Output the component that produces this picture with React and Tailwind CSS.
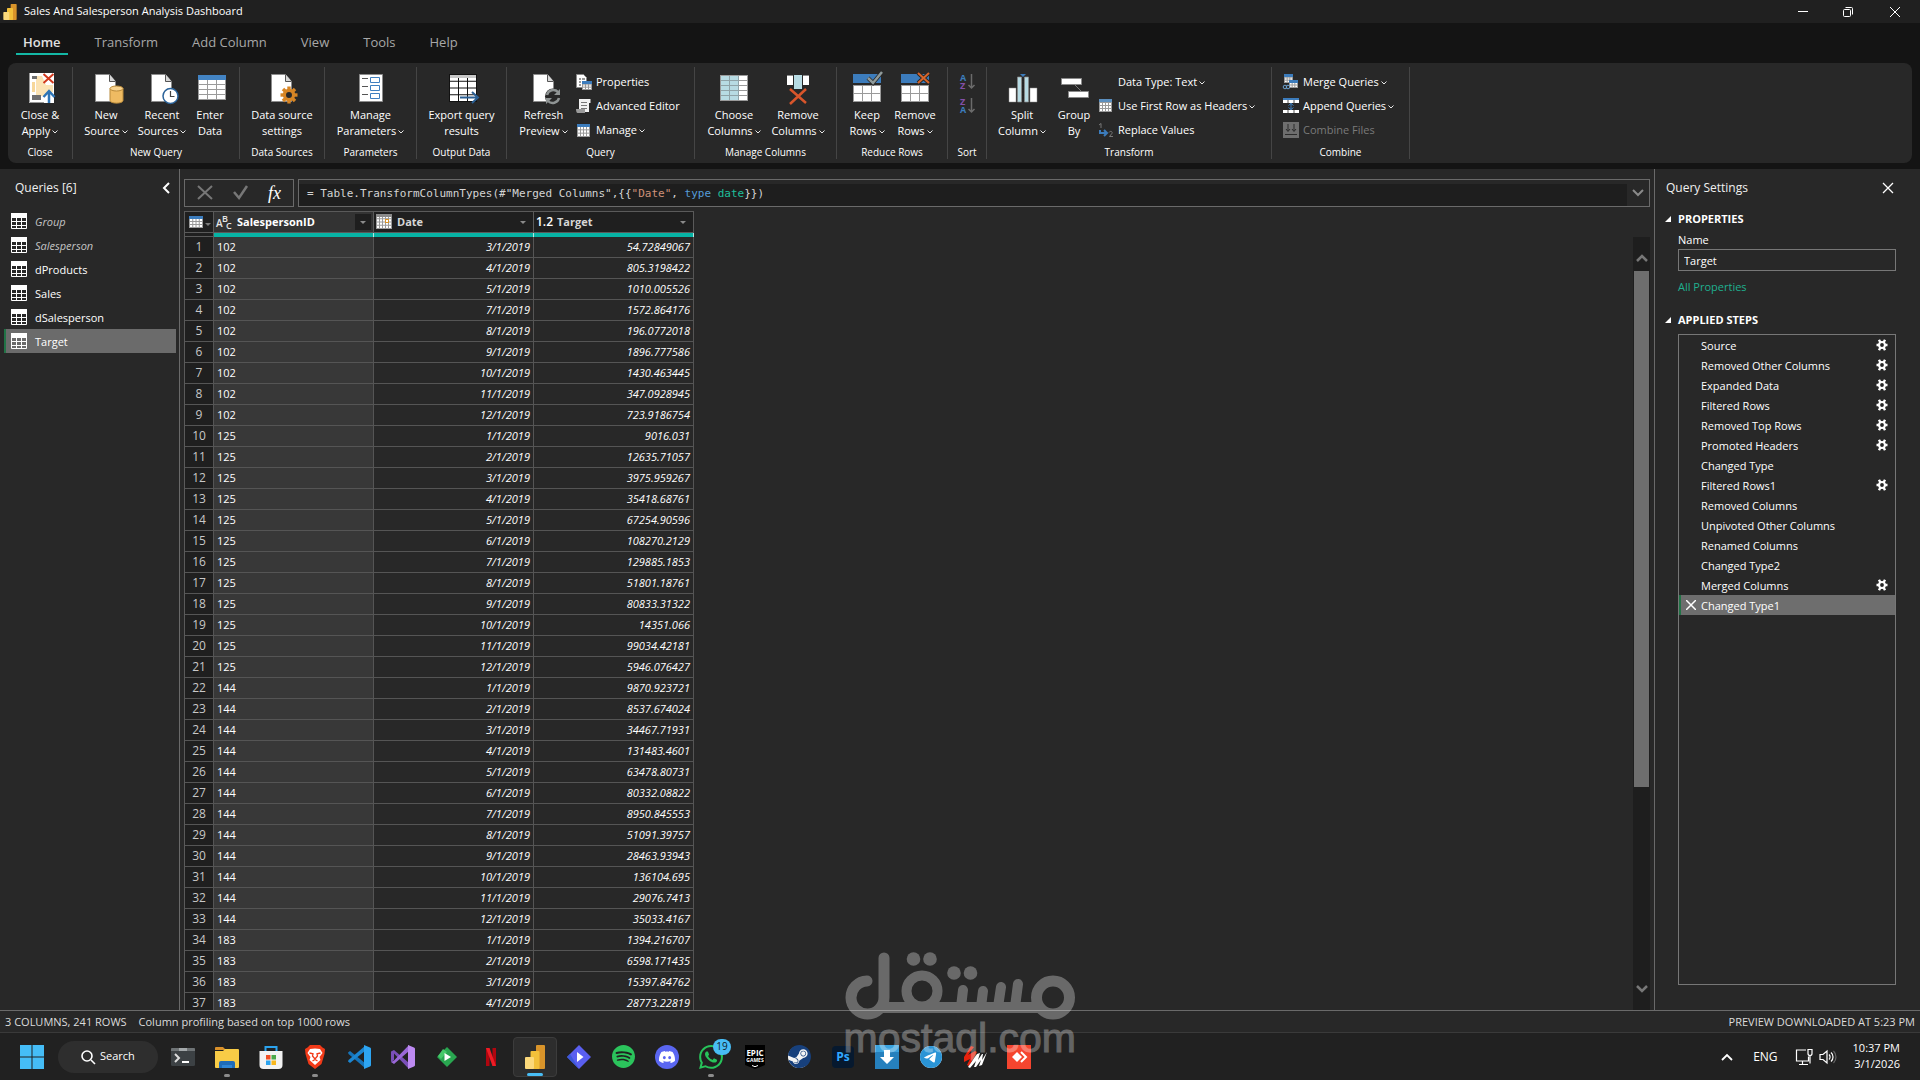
import React from 'react';
import { SiSpotify, SiDiscord, SiWhatsapp, SiSteam, SiTelegram } from 'react-icons/si';

const UI = "font-['Open_Sans','Noto_Sans',sans-serif]";

/* ---------- ribbon icons ---------- */

function Big({ children }) {
  return (
    <svg className="h-8 w-8 shrink-0 overflow-visible" viewBox="0 0 32 32" fill="none" aria-hidden="true">
      {children}
    </svg>
  );
}

function Doc() {
  return (
    <>
      <path d="M5.500 3.500h14l6 7v20h-20z" fill="#fff" stroke="#8c8c8c" />
      <path d="M19.500 3.500v7h6" fill="#d8d8d8" stroke="#555" />
    </>
  );
}

function Gear({ cx, cy, r, color, hole }) {
  const teeth = [0, 45, 90, 135, 180, 225, 270, 315];
  return (
    <g transform={`translate(${cx} ${cy})`}>
      {teeth.map((a) => (
        <rect key={a} x={-r * 0.2} y={-r} width={r * 0.4} height={r * 0.5} fill={color} transform={`rotate(${a})`} />
      ))}
      <circle r={r * 0.54} stroke={color} strokeWidth={r * 0.38} fill={hole} />
    </g>
  );
}

function Grid({ x, y, w, h, cols, rows, fill = '#fff', line = '#9a9a9a' }) {
  const v = Array.from({ length: cols - 1 }, (_, i) => x + ((i + 1) * w) / cols);
  const hz = Array.from({ length: rows - 1 }, (_, i) => y + ((i + 1) * h) / rows);
  return (
    <g>
      <rect x={x} y={y} width={w} height={h} fill={fill} stroke={line} />
      {v.map((p) => (
        <path key={'v' + p} d={`M${p} ${y}v${h}`} stroke={line} />
      ))}
      {hz.map((p) => (
        <path key={'h' + p} d={`M${x} ${p}h${w}`} stroke={line} />
      ))}
    </g>
  );
}

const icons = {
  close: (
    <Big>
      <path d="M5 2h25v30H5z" fill="#fff" />
      <path d="M5.500 2v29.500H20" stroke="#999" />
      <path d="M12 5h6l4 9h7v7l-9 4h-8z" fill="#fbe3b4" />
      <path d="M8 5h5v3H8zM8 24h9v5H8z" fill="#6f6f6f" />
      <path d="M8 11h3v10H8z" fill="#f7d79a" />
      <path d="M19.500 3l10 9M29.500 3l-10 9" stroke="#d13a1e" strokeWidth="2" />
      <path d="M25 32V21M19.500 26l5.500-6 5.500 6" stroke="#2e75b6" strokeWidth="2.500" />
    </Big>
  ),
  newSource: (
    <Big>
      <Doc />
      <path d="M20 17.500v12c0 3.500 13 3.500 13 0v-12z" fill="#efbb62" stroke="#b98a3a" />
      <ellipse cx="26.500" cy="17.500" rx="6.500" ry="2.500" fill="#f9d48f" stroke="#b98a3a" />
    </Big>
  ),
  recent: (
    <Big>
      <Doc />
      <circle cx="24.500" cy="25" r="7.500" fill="#fff" stroke="#2a6299" strokeWidth="1.500" />
      <path d="M24.500 20v5.500h4" stroke="#444" strokeWidth="1.200" />
    </Big>
  ),
  enter: (
    <Big>
      <Grid x={4.5} y={8.5} w={27} h={20} cols={3} rows={4} />
      <path d="M4 4h28v5H4z" fill="#4384c4" />
    </Big>
  ),
  dataSource: (
    <Big>
      <Doc />
      <Gear cx={23} cy={24} r={8.5} color="#d78524" hole="#282828" />
    </Big>
  ),
  params: (
    <Big>
      <path d="M4.500 3.500h23v27h-23z" fill="#fff" stroke="#8c8c8c" />
      <path d="M7 7.500h6M7 15.500h6M7 23.500h6" stroke="#555" />
      <path d="M15.500 6.500h9v5h-9zM15.500 14.500h9v5h-9zM15.500 22.500h9v5h-9z" stroke="#3f7fbf" />
    </Big>
  ),
  exportQ: (
    <Big>
      <Grid x={3.5} y={3.5} w={27} h={27} cols={3} rows={4} line="#111" />
      <path d="M4 4h26v3H4z" fill="#c8c8c8" />
      <path d="M14 26.500h17M26 21l6 5.500-6 5.500" stroke="#2a5f94" strokeWidth="2" />
    </Big>
  ),
  refresh: (
    <Big>
      <Doc />
      <circle cx="25" cy="25.500" r="8" fill="#282828" />
      <path d="M19 24a6.500 6.500 0 0 1 11-3M31 27a6.500 6.500 0 0 1-11 3" stroke="#8f9494" strokeWidth="2.500" />
      <path d="M32 18v6h-6zM18 33v-6h6z" fill="#8f9494" />
    </Big>
  ),
  choose: (
    <Big>
      <Grid x={2.5} y={4.5} w={27} h={25} cols={3} rows={5} />
      <path d="M3 5h18v24H3z" fill="#b7dbe3" />
      <path d="M11.500 5v24M20.500 5v24M3 9.500h18M3 14.500h18M3 19.500h18M3 24.500h18" stroke="#8fa3a8" />
    </Big>
  ),
  removeCols: (
    <Big>
      <path d="M5 4h6v10H5zM21 4h6v10h-6z" fill="#fff" />
      <path d="M5 4.500h6M21 4.500h6" stroke="#888" />
      <path d="M12 4h8v14h-8z" fill="#b7dbe3" />
      <path d="M8 18l16 14M24 18L8 33" stroke="#d8552b" strokeWidth="2.500" />
    </Big>
  ),
  keepRows: (
    <Big>
      <path d="M2 3h28v9H2z" fill="#3c7cbc" />
      <Grid x={2.5} y={14.5} w={27} h={16} cols={3} rows={2} />
      <path d="M17 7l5 5 9-11" stroke="#282828" strokeWidth="4" />
      <path d="M17 7l5 5 9-11" stroke="#8f9a9a" strokeWidth="2.500" />
    </Big>
  ),
  removeRows: (
    <Big>
      <path d="M2 3h28v9H2z" fill="#3c7cbc" />
      <Grid x={2.5} y={14.5} w={27} h={16} cols={3} rows={2} />
      <path d="M19 2l11 10M30 2L19 12" stroke="#282828" strokeWidth="4" />
      <path d="M19 2l11 10M30 2L19 12" stroke="#d8652b" strokeWidth="2" />
    </Big>
  ),
  split: (
    <Big>
      <path d="M3 17h7v14H3zM24 17h7v14h-7z" fill="#fff" stroke="#8a8a8a" strokeWidth=".5" />
      <path d="M11.500 6h4v25h-4zM18.500 6h4v25h-4z" fill="#b7dbe3" stroke="#8a8a8a" strokeWidth=".7" />
      <path d="M14 3h6l-3 3z" fill="#3c7cbc" />
      <path d="M17 8v23" stroke="#222" strokeDasharray="2 1" />
    </Big>
  ),
  group: (
    <Big>
      <path d="M17 14l6 6" stroke="#777" />
      <path d="M3.500 7.500h20v6h-20zM10.500 20.500h20v6h-20z" fill="#fff" stroke="#8a8a8a" />
    </Big>
  ),
};

function Small({ children }) {
  return (
    <svg className="h-4 w-4 shrink-0 overflow-visible" viewBox="0 0 16 16" fill="none" aria-hidden="true">
      {children}
    </svg>
  );
}

const small = {
  properties: (
    <Small>
      <path d="M.5.500h7l3 3v10H.500z" fill="#fff" stroke="#888" />
      <path d="M3 5h2M3 8h2M3 11h2M6 5h3" stroke="#777" strokeWidth="1.500" />
      <Grid x={6.5} y={8.5} w={9} h={7} cols={3} rows={3} />
      <path d="M6 7h10v3H6z" fill="#3c7cbc" />
    </Small>
  ),
  advanced: (
    <Small>
      <path d="M3 1h11.500v4H13v9H3z" fill="#f1f1f1" />
      <path d="M5 4.500h6M5 7.500h6M5 10.500h6" stroke="#777" />
      <path d="M0 11h9v4H1.500C.5 15 0 13 0 11z" fill="#9a9a9a" />
    </Small>
  ),
  manage: (
    <Small>
      <Grid x={1.5} y={4.5} w={12} h={10} cols={4} rows={3} />
      <path d="M1 2h13v3H1z" fill="#3c7cbc" />
    </Small>
  ),
  headers: (
    <Small>
      <Grid x={1.5} y={1.5} w={12} h={12} cols={4} rows={4} />
      <path d="M1 1h13v3H1z" fill="#5b8fbf" />
    </Small>
  ),
  replace: (
    <Small>
      <path d="M1 3l2-1.500V6" stroke="#777" />
      <path d="M11 10.500c1-2 4-1 3 .8L11.500 14.500H15" stroke="#777" />
      <path d="M2 8v3h6M6 8l3 3-3 3" stroke="#3c7cbc" strokeWidth="2" />
    </Small>
  ),
  merge: (
    <Small>
      <Grid x={1.5} y={1.5} w={8} h={7} cols={3} rows={3} />
      <path d="M1 0h9v3H1z" fill="#3c7cbc" />
      <Grid x={6.5} y={8.5} w={8} h={5} cols={3} rows={2} />
      <path d="M6 6h9v3H6z" fill="#3c7cbc" />
      <circle cx="2" cy="13" r="1.800" stroke="#6ba0cf" />
      <circle cx="5" cy="13" r="1.800" stroke="#6ba0cf" />
    </Small>
  ),
  append: (
    <Small>
      <path d="M0 2h16v3H0zM0 12h16v3H0z" fill="#fff" />
      <path d="M0 0h16v2H0z" fill="#3c7cbc" />
      <path d="M5 5v-3M11 5v-3M5 12v3M11 12v3" stroke="#555" />
      <path d="M8 5v7M5.500 7.500L8 5.500l2.500 2M5.500 9.500L8 11.500l2.500-2" stroke="#3c7cbc" />
    </Small>
  ),
  combine: (
    <Small>
      <path d="M0 0h16v16H0z" fill="#6e6e6e" />
      <path d="M5 2v7M11 2v7M3 7l2 2.500L7 7M9 7l2 2.500L13 7M2 12.500h12" stroke="#2b2b2b" />
    </Small>
  ),
};

function Caret() {
  return (
    <svg className="ml-0.5 inline-block h-1.5 w-1.5" viewBox="0 0 6 6" fill="none" aria-hidden="true">
      <path d="M.5 1.500L3 4l2.500-2.500" stroke="#e8e8e8" />
    </svg>
  );
}

function BigButton({ icon, a, b, caret, width }) {
  return (
    <button type="button" className={`flex shrink-0 flex-col items-center pt-2 text-[11px] leading-4 whitespace-nowrap text-white ${width}`}>
      {icon}
      <span className="mt-1">{a}</span>
      <span>
        {b}
        {caret && <Caret />}
      </span>
    </button>
  );
}

function SmallButton({ icon, label, caret, disabled }) {
  return (
    <button
      type="button"
      disabled={disabled}
      className={`flex h-6 items-center gap-1 text-[11px] leading-4 whitespace-nowrap ${disabled ? 'text-[#7a7a7a]' : 'text-white'}`}
    >
      {icon || <span className="w-4" />}
      <span>
        {label}
        {caret && <Caret />}
      </span>
    </button>
  );
}

function Group({ label, width, className = '', children }) {
  return (
    <section className={`my-1 flex shrink-0 flex-col justify-between border-r border-[#454545] ${width}`}>
      <div className={`-mt-1 flex ${className}`}>{children}</div>
      <h2 className="text-center text-[10px] leading-[14px] whitespace-nowrap text-white">{label}</h2>
    </section>
  );
}

function SortIcon({ top, bottom }) {
  const c = { A: '#3c7cbc', Z: '#8350a8' };
  return (
    <svg className="h-5 w-4 overflow-visible" viewBox="0 0 16 20" fill="none" aria-hidden="true">
      <text x="1" y="9" fontSize="9" fontWeight="700" fontFamily="Open Sans" fill={c[top]}>{top}</text>
      <text x="1" y="17" fontSize="9" fontWeight="700" fontFamily="Open Sans" fill={c[bottom]}>{bottom}</text>
      <path d="M12.500 2v14M9.500 13l3 3 3-3" stroke="#6b6b6b" strokeWidth="1.500" />
    </svg>
  );
}

function PowerBI({ className }) {
  return (
    <svg className={className} viewBox="0 0 20 24" aria-hidden="true">
      <rect x="11" y="0" width="9" height="24" rx="1" fill="#d9942a" />
      <rect x="5.500" y="6" width="9" height="18" rx="1" fill="#f2c03a" />
      <rect x="0" y="12" width="9" height="12" rx="1" fill="#fbd97b" />
    </svg>
  );
}

/* ---------- page sections ---------- */

function TitleBar() {
  return (
    <header className="flex h-[23px] shrink-0 items-center bg-[#202020] text-[11px] text-white">
      <PowerBI className="ml-[3px] h-4 w-3.5" />
      <h1 className="ml-[7px] flex-1">Sales And Salesperson Analysis Dashboard</h1>
      <button type="button" aria-label="Minimize" className="flex h-full w-[46px] items-center justify-center">
        <span className="h-px w-2.5 bg-white" />
      </button>
      <button type="button" aria-label="Restore" className="flex h-full w-11 items-center justify-center">
        <svg className="h-2.5 w-2.5" viewBox="0 0 10 10" fill="none" stroke="#fff">
          <rect x=".5" y="2.500" width="7" height="7" rx="1" />
          <path d="M2.500.5h6a1 1 0 0 1 1 1v6" />
        </svg>
      </button>
      <button type="button" aria-label="Close" className="flex h-full w-[50px] items-center justify-center">
        <svg className="h-2.5 w-2.5" viewBox="0 0 10 10" fill="none" stroke="#fff">
          <path d="M0 0l10 10M10 0L0 10" />
        </svg>
      </button>
    </header>
  );
}

function Tabs() {
  const tabs = ['Home', 'Transform', 'Add Column', 'View', 'Tools', 'Help'];
  return (
    <nav className="flex h-10 shrink-0 items-start gap-5 px-4 pt-1.5 text-[13px] text-[#a8a8a8]">
      {tabs.map((t, i) => (
        <button
          key={t}
          type="button"
          className={`h-[26px] border-b-2 px-[7px] pt-0.5 leading-[22px] ${i === 0 ? 'border-[#14b8a6] font-semibold text-[#e0e0e0]' : 'border-transparent'}`}
        >
          {t}
        </button>
      ))}
    </nav>
  );
}

function Ribbon() {
  return (
    <div className="mx-2 flex h-[100px] shrink-0 overflow-hidden rounded-lg bg-[#282828]">
      <Group label="Close" width="w-[65px]" className="justify-center">
        <BigButton icon={icons.close} a="Close &" b="Apply" caret width="w-14" />
      </Group>
      <Group label="New Query" width="w-[167px]" className="pl-[7px]">
        <BigButton icon={icons.newSource} a="New" b="Source" caret width="w-[52px]" />
        <BigButton icon={icons.recent} a="Recent" b="Sources" caret width="w-[60px]" />
        <BigButton icon={icons.enter} a="Enter" b="Data" width="w-9" />
      </Group>
      <Group label="Data Sources" width="w-[85px]" className="justify-center">
        <BigButton icon={icons.dataSource} a="Data source" b="settings" width="w-20" />
      </Group>
      <Group label="Parameters" width="w-[92px]" className="justify-center">
        <BigButton icon={icons.params} a="Manage" b="Parameters" caret width="w-20" />
      </Group>
      <Group label="Output Data" width="w-[90px]" className="justify-center">
        <BigButton icon={icons.exportQ} a="Export query" b="results" width="w-20" />
      </Group>
      <Group label="Query" width="w-[188px]" className="gap-1 pl-2">
        <BigButton icon={icons.refresh} a="Refresh" b="Preview" caret width="w-[57px]" />
        <div className="flex flex-col pt-[7px]">
          <SmallButton icon={small.properties} label="Properties" />
          <SmallButton icon={small.advanced} label="Advanced Editor" />
          <SmallButton icon={small.manage} label="Manage" caret />
        </div>
      </Group>
      <Group label="Manage Columns" width="w-[142px]" className="pl-[7px]">
        <BigButton icon={icons.choose} a="Choose" b="Columns" caret width="w-16" />
        <BigButton icon={icons.removeCols} a="Remove" b="Columns" caret width="w-16" />
      </Group>
      <Group label="Reduce Rows" width="w-[111px]" className="pl-1.5">
        <BigButton icon={icons.keepRows} a="Keep" b="Rows" caret width="w-12" />
        <BigButton icon={icons.removeRows} a="Remove" b="Rows" caret width="w-12" />
      </Group>
      <Group label="Sort" width="w-[39px]" className="flex-col items-center pt-[7px]">
        <button type="button" aria-label="Sort ascending" className="flex h-6 items-center">
          <SortIcon top="A" bottom="Z" />
        </button>
        <button type="button" aria-label="Sort descending" className="flex h-6 items-center">
          <SortIcon top="Z" bottom="A" />
        </button>
      </Group>
      <Group label="Transform" width="w-[285px]" className="pl-[7px]">
        <BigButton icon={icons.split} a="Split" b="Column" caret width="w-14" />
        <BigButton icon={icons.group} a="Group" b="By" width="w-12" />
        <div className="flex flex-col pt-[7px]">
          <SmallButton label="Data Type: Text" caret />
          <SmallButton icon={small.headers} label="Use First Row as Headers" caret />
          <SmallButton icon={small.replace} label="Replace Values" />
        </div>
      </Group>
      <Group label="Combine" width="w-[138px]" className="pl-[11px]">
        <div className="flex flex-col pt-[7px]">
          <SmallButton icon={small.merge} label="Merge Queries" caret />
          <SmallButton icon={small.append} label="Append Queries" caret />
          <SmallButton icon={small.combine} label="Combine Files" disabled />
        </div>
      </Group>
    </div>
  );
}

function QueryIcon() {
  return (
    <svg className="h-4 w-4 shrink-0" viewBox="0 0 16 16" fill="none" stroke="#fff" aria-hidden="true">
      <path d="M0 0h16v5H0z" fill="#fff" stroke="none" />
      <path d="M.5.500h15v15H.500zM5.500 5v11M10.500 5v11M0 8.500h16M0 12.500h16" />
    </svg>
  );
}

const queries = ['Group', 'Salesperson', 'dProducts', 'Sales', 'dSalesperson', 'Target'];

function QueriesPane() {
  return (
    <aside className="w-[180px] shrink-0 border-r border-[#6a6a6a]">
      <div className="flex h-10 items-center justify-between pr-[7px] pb-[3px] pl-[15px] text-[12px] text-[#f0f0f0]">
        <h2>Queries [6]</h2>
        <button type="button" aria-label="Collapse" className="p-0.5">
          <svg className="h-3 w-2" viewBox="0 0 8 12" fill="none">
            <path d="M7 1L2 6l5 5" stroke="#fff" strokeWidth="2" />
          </svg>
        </button>
      </div>
      <ul className="pr-[3px] pl-1 text-[11px] text-white">
        {queries.map((q, i) => (
          <li key={q}>
            <button
              type="button"
              className={`flex h-6 w-full items-center gap-2 border-l-2 pl-[5px] text-left ${
                i === 5 ? 'border-[#217346] bg-[#6b6b6b]' : 'border-transparent'
              } ${i < 2 ? 'text-[#c4c4c4] italic' : ''}`}
            >
              <QueryIcon />
              <span className="pt-0.5">{q}</span>
            </button>
          </li>
        ))}
      </ul>
    </aside>
  );
}

const rows = [
  ['102', '3/1/2019', '54.72849067'],
  ['102', '4/1/2019', '805.3198422'],
  ['102', '5/1/2019', '1010.005526'],
  ['102', '7/1/2019', '1572.864176'],
  ['102', '8/1/2019', '196.0772018'],
  ['102', '9/1/2019', '1896.777586'],
  ['102', '10/1/2019', '1430.463445'],
  ['102', '11/1/2019', '347.0928945'],
  ['102', '12/1/2019', '723.9186754'],
  ['125', '1/1/2019', '9016.031'],
  ['125', '2/1/2019', '12635.71057'],
  ['125', '3/1/2019', '3975.959267'],
  ['125', '4/1/2019', '35418.68761'],
  ['125', '5/1/2019', '67254.90596'],
  ['125', '6/1/2019', '108270.2129'],
  ['125', '7/1/2019', '129885.1853'],
  ['125', '8/1/2019', '51801.18761'],
  ['125', '9/1/2019', '80833.31322'],
  ['125', '10/1/2019', '14351.066'],
  ['125', '11/1/2019', '99034.42181'],
  ['125', '12/1/2019', '5946.076427'],
  ['144', '1/1/2019', '9870.923721'],
  ['144', '2/1/2019', '8537.674024'],
  ['144', '3/1/2019', '34467.71931'],
  ['144', '4/1/2019', '131483.4601'],
  ['144', '5/1/2019', '63478.80731'],
  ['144', '6/1/2019', '80332.08822'],
  ['144', '7/1/2019', '8950.845553'],
  ['144', '8/1/2019', '51091.39757'],
  ['144', '9/1/2019', '28463.93943'],
  ['144', '10/1/2019', '136104.695'],
  ['144', '11/1/2019', '29076.7413'],
  ['144', '12/1/2019', '35033.4167'],
  ['183', '1/1/2019', '1394.216707'],
  ['183', '2/1/2019', '6598.171435'],
  ['183', '3/1/2019', '15397.84762'],
  ['183', '4/1/2019', '28773.22819'],
];

function FormulaBar() {
  return (
    <div className="flex h-7 shrink-0 gap-1 pr-1">
      <div className="flex w-[110px] shrink-0 items-center justify-between border border-[#6a6a6a] px-3">
        <button type="button" aria-label="Cancel">
          <svg className="h-4 w-4" viewBox="0 0 16 16" fill="none">
            <path d="M1 1l14 13M15 1L1 14" stroke="#777" strokeWidth="2" />
          </svg>
        </button>
        <button type="button" aria-label="Commit">
          <svg className="h-4 w-4" viewBox="0 0 16 16" fill="none">
            <path d="M1 7l5 6 8-12" stroke="#777" strokeWidth="2.500" />
          </svg>
        </button>
        <button type="button" aria-label="Insert function" className="font-['Liberation_Serif',serif] text-[18px] leading-4 text-white italic">
          fx
        </button>
      </div>
      <div className="flex min-w-0 flex-1 items-stretch border border-[#6a6a6a]">
        <div
          role="textbox"
          aria-label="Formula"
          className="mt-1 flex-1 overflow-hidden bg-[#1e1e1e] pl-2 font-['DejaVu_Sans_Mono',monospace] text-[11px] leading-[19px] whitespace-pre text-[#d4d4d4]"
        >
          {'= Table.TransformColumnTypes(#"Merged Columns",{{'}
          <span className="text-[#ce9178]">"Date"</span>
          {', '}
          <span className="text-[#569cd6]">type</span> <span className="text-[#1fbf9c]">date</span>
          {'}})'}
        </div>
        <button type="button" aria-label="Expand formula" className="flex w-[22px] items-center justify-center">
          <svg className="h-2 w-3" viewBox="0 0 12 8" fill="none">
            <path d="M1 1l5 5 5-5" stroke="#8a8a8a" strokeWidth="2" />
          </svg>
        </button>
      </div>
    </div>
  );
}

function Drop({ boxed }) {
  return (
    <button type="button" aria-label="Column menu" className={`flex h-4 w-4 shrink-0 items-center justify-center ${boxed ? 'bg-[#1e1e1e]' : ''}`}>
      <span className="border-x-[3px] border-t-[3px] border-x-transparent border-t-[#8a8a8a]" />
    </button>
  );
}

function HeadCell({ icon, name, boxed }) {
  return (
    <th scope="col" className={`h-[22px] border-t border-r border-b border-[#5a5a5a] p-0 font-bold ${boxed ? 'bg-[#333333] text-white' : 'bg-[#1f1f1f] text-[#d6d6d6]'}`}>
      <div className="flex items-center px-0.5">
        <span className="w-[21px] shrink-0">{icon}</span>
        <span className="flex-1 text-left">{name}</span>
        <Drop boxed={boxed} />
      </div>
    </th>
  );
}

function DataGrid() {
  return (
    <table className="w-[510px] table-fixed border-separate border-spacing-0 border-l border-[#5a5a5a] text-[11px] leading-[20px] text-white">
      <colgroup>
        <col className="w-[29px]" />
        <col className="w-[160px]" />
        <col className="w-[160px]" />
        <col className="w-[160px]" />
      </colgroup>
      <thead>
        <tr>
          <th className="h-[22px] border-t border-r border-b border-[#5a5a5a] bg-[#1f1f1f] p-0">
            <button type="button" aria-label="Table menu" className="flex h-5 items-center gap-0.5 pl-1">
              <svg className="h-3 w-3.5" viewBox="0 0 14 12" fill="none">
                <Grid x={0.5} y={2.5} w={13} h={9} cols={4} rows={3} />
                <path d="M0 0h14v3H0z" fill="#3c7cbc" />
              </svg>
              <span className="mt-1 border-x-[3px] border-t-[3px] border-x-transparent border-t-[#7a7a7a]" />
            </button>
          </th>
          <HeadCell
            boxed
            name="SalespersonID"
            icon={
              <svg className="h-4 w-4 overflow-visible" viewBox="0 0 16 16" aria-label="Text">
                <g fill="#e6e6e6" fontSize="10" fontFamily="Open Sans" fontWeight="600">
                  <text x="0" y="13">A</text>
                  <text x="6" y="8" fontSize="9">B</text>
                  <text x="10" y="15" fontSize="9">C</text>
                </g>
              </svg>
            }
          />
          <HeadCell
            name="Date"
            icon={
              <svg className="h-4 w-4" viewBox="0 0 16 16" fill="none" aria-label="Date">
                <Grid x={0.5} y={1.5} w={15} h={13} cols={5} rows={4} />
                <path d="M0 0h16v3H0z" fill="#8a8a8a" />
                <rect x="9.500" y="5.500" width="3" height="3" fill="#fff" stroke="#d8942a" />
              </svg>
            }
          />
          <HeadCell name="Target" icon={<span className="block text-left text-[12px] leading-4 font-semibold text-white">1.2</span>} />
        </tr>
        <tr>
          <td className="h-1 border-r border-b border-[#5a5a5a] bg-[#1f1f1f] p-0" />
          <td className="h-1 border-r border-[#b9e6e0] bg-[#07b3a5] p-0" />
          <td className="h-1 border-r border-[#b9e6e0] bg-[#07b3a5] p-0" />
          <td className="h-1 border-r border-[#b9e6e0] bg-[#07b3a5] p-0" />
        </tr>
      </thead>
      <tbody>
        {rows.map(([id, date, target], i) => (
          <tr key={i}>
            <th scope="row" className="border-r border-b border-[#555] bg-[#1f1f1f] p-0 text-center text-[12px] font-normal text-[#c8c8c8]">
              {i + 1}
            </th>
            <td className="border-r border-b border-[#555] bg-[#383838] py-0 pr-0 pl-[3px] font-medium">{id}</td>
            <td className="border-r border-b border-[#555] py-0 pr-[3px] pl-0 text-right font-medium italic">{date}</td>
            <td className="border-r border-b border-[#555] py-0 pr-[3px] pl-0 text-right font-medium italic">{target}</td>
          </tr>
        ))}
      </tbody>
    </table>
  );
}

function ScrollBar() {
  return (
    <div className="mt-[26px] mr-1 flex w-[17px] shrink-0 flex-col bg-[#1e1e1e]">
      <button type="button" aria-label="Scroll up" className="flex h-[34px] items-end justify-center pb-2">
        <svg className="h-2.5 w-3" viewBox="0 0 12 10" fill="none">
          <path d="M1 8l5-5 5 5" stroke="#777" strokeWidth="2.500" />
        </svg>
      </button>
      <div className="flex min-h-0 flex-1 flex-col">
        <div className="mx-px h-[74%] bg-[#6e6e6e]" />
      </div>
      <button type="button" aria-label="Scroll down" className="flex h-[42px] items-center justify-center">
        <svg className="h-2.5 w-3" viewBox="0 0 12 10" fill="none">
          <path d="M1 2l5 5 5-5" stroke="#777" strokeWidth="2.500" />
        </svg>
      </button>
    </div>
  );
}

const steps = [
  ['Source', 1],
  ['Removed Other Columns', 1],
  ['Expanded Data', 1],
  ['Filtered Rows', 1],
  ['Removed Top Rows', 1],
  ['Promoted Headers', 1],
  ['Changed Type', 0],
  ['Filtered Rows1', 1],
  ['Removed Columns', 0],
  ['Unpivoted Other Columns', 0],
  ['Renamed Columns', 0],
  ['Changed Type2', 0],
  ['Merged Columns', 1],
  ['Changed Type1', 0],
];

function SectionTitle({ children }) {
  return (
    <h3 className="flex h-5 items-center gap-[7px] pl-2.5 text-[11px] font-bold text-white">
      <svg className="h-1.5 w-1.5" viewBox="0 0 6 6" aria-hidden="true">
        <path d="M6 0v6H0z" fill="#fff" />
      </svg>
      {children}
    </h3>
  );
}

function SettingsPane() {
  return (
    <aside className="flex w-[266px] shrink-0 flex-col border-l border-[#6a6a6a] text-[11px] text-white">
      <div className="flex h-10 shrink-0 items-center justify-between pr-[26px] pb-[3px] pl-[11px]">
        <h2 className="text-[12px] text-[#f0f0f0]">Query Settings</h2>
        <button type="button" aria-label="Close settings">
          <svg className="h-3 w-3" viewBox="0 0 12 12" fill="none" stroke="#fff" strokeWidth="1.300">
            <path d="M1 1l10 10M11 1L1 11" />
          </svg>
        </button>
      </div>
      <SectionTitle>PROPERTIES</SectionTitle>
      <div className="mr-6 ml-[23px] flex flex-col">
        <label htmlFor="qname" className="h-5 leading-[22px]">
          Name
        </label>
        <input id="qname" defaultValue="Target" className="h-[22px] w-full border border-[#777] bg-transparent px-[5px] outline-none" />
        <a href="#all" className="mt-1.5 self-start leading-5 text-[#1fb08f]">
          All Properties
        </a>
      </div>
      <div className="h-[13px] shrink-0" />
      <SectionTitle>APPLIED STEPS</SectionTitle>
      <ul className="mt-1 mr-6 mb-[25px] ml-[23px] min-h-0 flex-1 border border-[#777]">
        {steps.map(([s, gear], i) => (
          <li
            key={s}
            className={`flex h-5 items-center border-l-2 pr-[7px] ${i === 13 ? 'border-[#217346] bg-[#6e6e6e]' : 'border-transparent'}`}
          >
            <span className="flex w-5 shrink-0 justify-center">
              {i === 13 && (
                <button type="button" aria-label="Delete step">
                  <svg className="h-2.5 w-2.5" viewBox="0 0 10 10" fill="none" stroke="#fff" strokeWidth="1.500">
                    <path d="M0 0l10 10M10 0L0 10" />
                  </svg>
                </button>
              )}
            </span>
            <span className="flex-1 pt-0.5">{s}</span>
            {gear === 1 && (
              <button type="button" aria-label={`Edit ${s}`}>
                <svg className="h-3 w-3" viewBox="0 0 12 12" fill="none">
                  <g stroke="#fff" strokeWidth="2.400">
                    <path d="M.5 6h2.500M9 6h2.500M3 .8l1.300 2.500M9 .8L7.700 3.300M3 11.200l1.300-2.500M9 11.200L7.700 8.700" />
                    <circle cx="6" cy="6" r="2.900" strokeWidth="2" />
                  </g>
                </svg>
              </button>
            )}
          </li>
        ))}
      </ul>
    </aside>
  );
}

/* ---------- taskbar ---------- */

function T({ children }) {
  return (
    <svg className="h-6 w-6" viewBox="0 0 24 24" fill="none">
      {children}
    </svg>
  );
}

const apps = [
  { name: 'Terminal', icon: (
    <T>
      <rect y="3" width="24" height="18" rx="1.500" fill="#3c4144" />
      <path d="M1 3h22a1 1 0 0 1 1 1v2H0V4a1 1 0 0 1 1-1z" fill="#6f7476" />
      <path d="M8 3h8v3H8z" fill="#a3a8aa" />
      <path d="M4 9l4 4-4 4" stroke="#ddd" strokeWidth="2" />
      <path d="M11 17h7" stroke="#fff" strokeWidth="2" />
    </T>
  ) },
  { name: 'Explorer', running: true, icon: (
    <T>
      <path d="M0 3a1 1 0 0 1 1-1h7l3 3H0z" fill="#d9902a" />
      <path d="M0 6h8l2-2h13a1 1 0 0 1 1 1v17a1 1 0 0 1-1 1H1a1 1 0 0 1-1-1z" fill="#f8cc46" />
      <path d="M4 23v-5a2 2 0 0 1 2-2h12a2 2 0 0 1 2 2v5z" fill="#1f6cb8" />
      <path d="M7 20h10v3H7z" fill="#2f86d6" />
    </T>
  ) },
  { name: 'Store', icon: (
    <T>
      <path d="M6.500 6V2h11v4" stroke="#2ba3ee" strokeWidth="2" />
      <path d="M.5 6h23v14a4 4 0 0 1-4 4h-15a4 4 0 0 1-4-4z" fill="#f2f2f2" />
      <path d="M7 10h4.500v4.500H7z" fill="#f04e23" />
      <path d="M12.500 10H17v4.500h-4.500z" fill="#4aa84a" />
      <path d="M7 15.500h4.500V20H7z" fill="#2ba3ee" />
      <path d="M12.500 15.500H17V20h-4.500z" fill="#f8b71c" />
    </T>
  ) },
  { name: 'Brave', running: true, icon: (
    <T>
      <path d="M7 0h10l2.500 2.500L22 4l-.5 5-3 10L12 24l-6.500-5-3-10L2 4l2.500-1.500z" fill="#f23a18" />
      <path d="M12 3.500l5 .5 2.500 4-3 4 1 3-5.500 5-5.500-5 1-3-3-4L7 4z" fill="#fff" />
      <path d="M6.500 8l3.500.8L9.500 11 12 14l2.500-3-.5-2.200 3.500-.8M9.500 16l2.500-1.500 2.500 1.500" stroke="#f23a18" strokeWidth="1.300" />
    </T>
  ) },
  { name: 'VS Code', icon: (
    <T>
      <path d="M1 7.500L3 6l15 12v5L1.500 9z" fill="#1673b8" />
      <path d="M1 16.500L3 18 18 6V1L1.500 15z" fill="#1c86d1" />
      <path d="M17 0l6 2.500a1.500 1.500 0 0 1 1 1.300v16.400a1.500 1.500 0 0 1-1 1.300L17 24z" fill="#2da5f2" />
    </T>
  ) },
  { name: 'Visual Studio', icon: (
    <T>
      <path d="M0 6.500l3-1.500L18 18v6L3 8.500V15l-3 2z" fill="#7a4fb8" />
      <path d="M0 17l3 2L18 6V0L3 15.500z" fill="#9a68d8" />
      <path d="M17 0l6 2.500a1.500 1.500 0 0 1 1 1.300v16.400a1.500 1.500 0 0 1-1 1.300L17 24z" fill="#bd8af2" />
    </T>
  ) },
  { name: 'Player', icon: (
    <T>
      <path d="M12 2l10 10-10 10L2 12z" fill="#29a650" />
      <path d="M8 4l4 3-6 7-3-3z" fill="#45c96a" />
      <path d="M9.500 8v8l6.500-4z" fill="#fff" />
    </T>
  ) },
  { name: 'Netflix', icon: (
    <T>
      <path d="M7 3h3.500v18H7zM13.500 3H17v18h-3.500z" fill="#b1060f" />
      <path d="M7 3h3.500L17 21h-3.500z" fill="#ee1c25" />
    </T>
  ) },
  { name: 'Power BI', active: true, icon: <PowerBI className="h-6 w-5" /> },
  { name: 'Stremio', icon: (
    <T>
      <path d="M12 0l12 12-12 12L0 12z" fill="#5a5ff0" />
      <path d="M12 24L0 12l3-3z" fill="#3c58d8" />
      <path d="M10 7v10l6.500-5z" fill="#fff" />
    </T>
  ) },
  { name: 'Spotify', icon: <SiSpotify className="h-[23px] w-[23px] text-[#2bc45c]" /> },
  { name: 'Discord', icon: (
    <span className="flex h-6 w-6 items-center justify-center rounded-full bg-[#5a66f0]">
      <SiDiscord className="h-4 w-4 text-white" />
    </span>
  ) },
  { name: 'WhatsApp', running: true, badge: '19', icon: <SiWhatsapp className="h-6 w-6 text-[#27c45a]" /> },
  { name: 'Epic Games', icon: (
    <T>
      <path d="M2 0h20v20l-10 4-10-4z" fill="#000" />
      <g fill="#fff" fontFamily="Open Sans" fontWeight="700" textAnchor="middle">
        <text x="12" y="10.500" fontSize="8">EPIC</text>
        <text x="12" y="17" fontSize="5">GAMES</text>
      </g>
      <path d="M9 20.500l3 1.200 3-1.200" stroke="#fff" />
    </T>
  ) },
  { name: 'Steam', icon: (
    <span className="flex h-[22px] w-[22px] items-center justify-center rounded-full bg-[#f4f4f4]">
      <SiSteam className="h-[23px] w-[23px] shrink-0 text-[#17407c]" />
    </span>
  ) },
  { name: 'Photoshop', icon: (
    <span className="flex h-[22px] w-[22px] items-center justify-center rounded bg-[#06192f] text-[12px] font-bold text-[#31a8ff]">Ps</span>
  ) },
  { name: 'Downloads', icon: (
    <T>
      <path d="M0 0h24v24H0z" fill="#2680bd" />
      <path d="M0 0h24v7H0z" fill="#3ba3df" />
      <path d="M9 5h6v7h4l-7 7-7-7h4z" fill="#fff" />
    </T>
  ) },
  { name: 'Telegram', icon: (
    <span className="flex h-[22px] w-[22px] items-center justify-center rounded-full bg-white">
      <SiTelegram className="h-[22px] w-[22px] shrink-0 text-[#2a94d6]" />
    </span>
  ) },
  { name: 'SM Player', icon: (
    <T>
      <path d="M8 1l3 1-6 8 7-4 2 1-8 14-2-1 3-6-6 3V12z" fill="#e8220c" />
      <path d="M14 9l3-1-2 7 4-6 1 0-1 6 5-8-5 13-3 1 2-6-5 7-2 0 2-6-6 7-2-1z" fill="#fff" />
    </T>
  ) },
  { name: 'AnyDesk', icon: (
    <T>
      <path d="M0 0h24v24H0z" fill="#f5452f" />
      <path d="M10 7l5 5-5 5-5-5z" fill="#fff" />
      <path d="M14 7l5 5-5 5" stroke="#fff" strokeWidth="2" />
    </T>
  ) },
];

function Taskbar() {
  return (
    <footer className="flex h-12 shrink-0 items-center border-t border-[#3a3a3a] bg-[#212121] text-[11px] text-white">
      <button type="button" aria-label="Start" className="ml-5 flex w-6 justify-center">
        <svg className="h-6 w-6" viewBox="0 0 24 24">
          <path d="M0 0h11.500v11.500H0zM12.500 0H24v11.500H12.500zM0 12.500h11.500V24H0zM12.500 12.500H24V24H12.500z" fill="#45bdf7" />
        </svg>
      </button>
      <button type="button" className="ml-3.5 flex h-8 w-[100px] items-center rounded-full bg-[#2e2e2e] pl-[22px] text-white">
        <svg className="mr-1 h-4 w-4" viewBox="0 0 16 16" fill="none" stroke="#fff" strokeWidth="1.600">
          <circle cx="7" cy="7" r="5" />
          <path d="M11 11l4 4" />
        </svg>
        Search
      </button>
      <div className="ml-[3px] flex h-full items-center">
        {apps.map((a) => (
          <button
            key={a.name}
            type="button"
            aria-label={a.name}
            className={`relative flex h-10 w-11 shrink-0 items-center justify-center ${
              a.active ? 'rounded border border-[#3c3c3c] bg-[#2d2d2d]' : ''
            }`}
          >
            {a.icon}
            {a.badge && (
              <span className="absolute top-0.5 right-0.5 flex h-4 w-[18px] items-center justify-center rounded-full bg-[#48bdf5] text-[10px] text-[#10202c]">
                {a.badge}
              </span>
            )}
            {(a.running || a.active) && (
              <span className={`absolute bottom-0 h-[3px] rounded-full ${a.active ? 'w-4 bg-[#48bdf5]' : 'w-1.5 bg-[#8c8c8c]'}`} />
            )}
          </button>
        ))}
      </div>
      <div className="ml-auto flex items-center pr-5 text-[12px]">
        <button type="button" aria-label="Show hidden icons" className="mr-5">
          <svg className="h-2 w-3" viewBox="0 0 12 8" fill="none">
            <path d="M1 7l5-5 5 5" stroke="#fff" strokeWidth="1.800" />
          </svg>
        </button>
        <span className="mr-[17px]">ENG</span>
        <svg className="mr-1.5 h-[18px] w-[18px]" viewBox="0 0 18 18" fill="none" stroke="#fff" strokeWidth="1.200">
          <path d="M11 2H1.500v11h12V8.500M4 16.500h9M7.500 13v3.500M13 1.500h4v4a2 2 0 0 1-4 0zM15 7.500v8" />
        </svg>
        <svg className="mr-4 h-4 w-[18px]" viewBox="0 0 18 16" fill="none" stroke="#fff" strokeWidth="1.200">
          <path d="M1 5.500h3L8 2v12l-4-3.500H1z" />
          <path d="M10 5.500a3.500 3.500 0 0 1 0 5M12 3.500a6 6 0 0 1 0 9" />
          <path d="M14.500 2a8.500 8.500 0 0 1 0 12" stroke="#666" />
        </svg>
        <div className="pb-0.5 text-right text-[11px] leading-4">
          <div>10:37 PM</div>
          <div>3/1/2026</div>
        </div>
      </div>
    </footer>
  );
}

function Watermark() {
  return (
    <div className="pointer-events-none absolute bottom-[23px] left-[44%] flex w-[230px] flex-col items-center opacity-30">
      <svg className="h-[67px] w-[230px] overflow-visible" viewBox="0 0 230 67" fill="none" stroke="#fff" strokeWidth="11" strokeLinecap="round" role="img" aria-label="مستقل">
        <path d="M22 29A16.500 16.500 0 1 0 39 45.500V6" />
        <path d="M34 55.500H196" strokeLinecap="butt" />
        <circle cx="77" cy="39" r="15.500" strokeWidth="10" />
        <path d="M118 38l-2 17M138 39l-2 16M156 35l-3 20M173 32l-3 23" strokeWidth="10" />
        <circle cx="208" cy="45.500" r="16.500" />
        <g fill="#fff" stroke="none">
          <circle cx="68.500" cy="7" r="6.800" />
          <circle cx="85" cy="7" r="6.800" />
          <circle cx="109" cy="21" r="6.800" />
          <circle cx="125.500" cy="21" r="6.800" />
        </g>
      </svg>
      <span className="font-['Liberation_Sans',sans-serif] text-[41px] leading-[38px] text-white [-webkit-text-stroke:1px_#fff]">mostaql.com</span>
    </div>
  );
}

export default function App() {
  return (
    <div className={`relative flex h-screen flex-col overflow-hidden bg-[#141414] ${UI}`}>
      <TitleBar />
      <Tabs />
      <Ribbon />
      <main className="mt-1.5 flex min-h-0 flex-1 bg-[#282828]">
        <QueriesPane />
        <div className="flex min-w-0 flex-1 flex-col pt-2.5 pl-1">
          <FormulaBar />
          <div className="mt-1 flex min-h-0 flex-1">
            <div className="min-w-0 flex-1 overflow-hidden">
              <DataGrid />
            </div>
            <ScrollBar />
          </div>
        </div>
        <SettingsPane />
      </main>
      <div className="flex h-[22px] shrink-0 items-center gap-3 border-t border-[#6a6a6a] bg-[#282828] px-[5px] pt-0.5 text-[11px] text-[#dcdcdc]">
        <span>3 COLUMNS, 241 ROWS</span>
        <span>Column profiling based on top 1000 rows</span>
        <span className="ml-auto">PREVIEW DOWNLOADED AT 5:23 PM</span>
      </div>
      <Taskbar />
      <Watermark />
    </div>
  );
}
